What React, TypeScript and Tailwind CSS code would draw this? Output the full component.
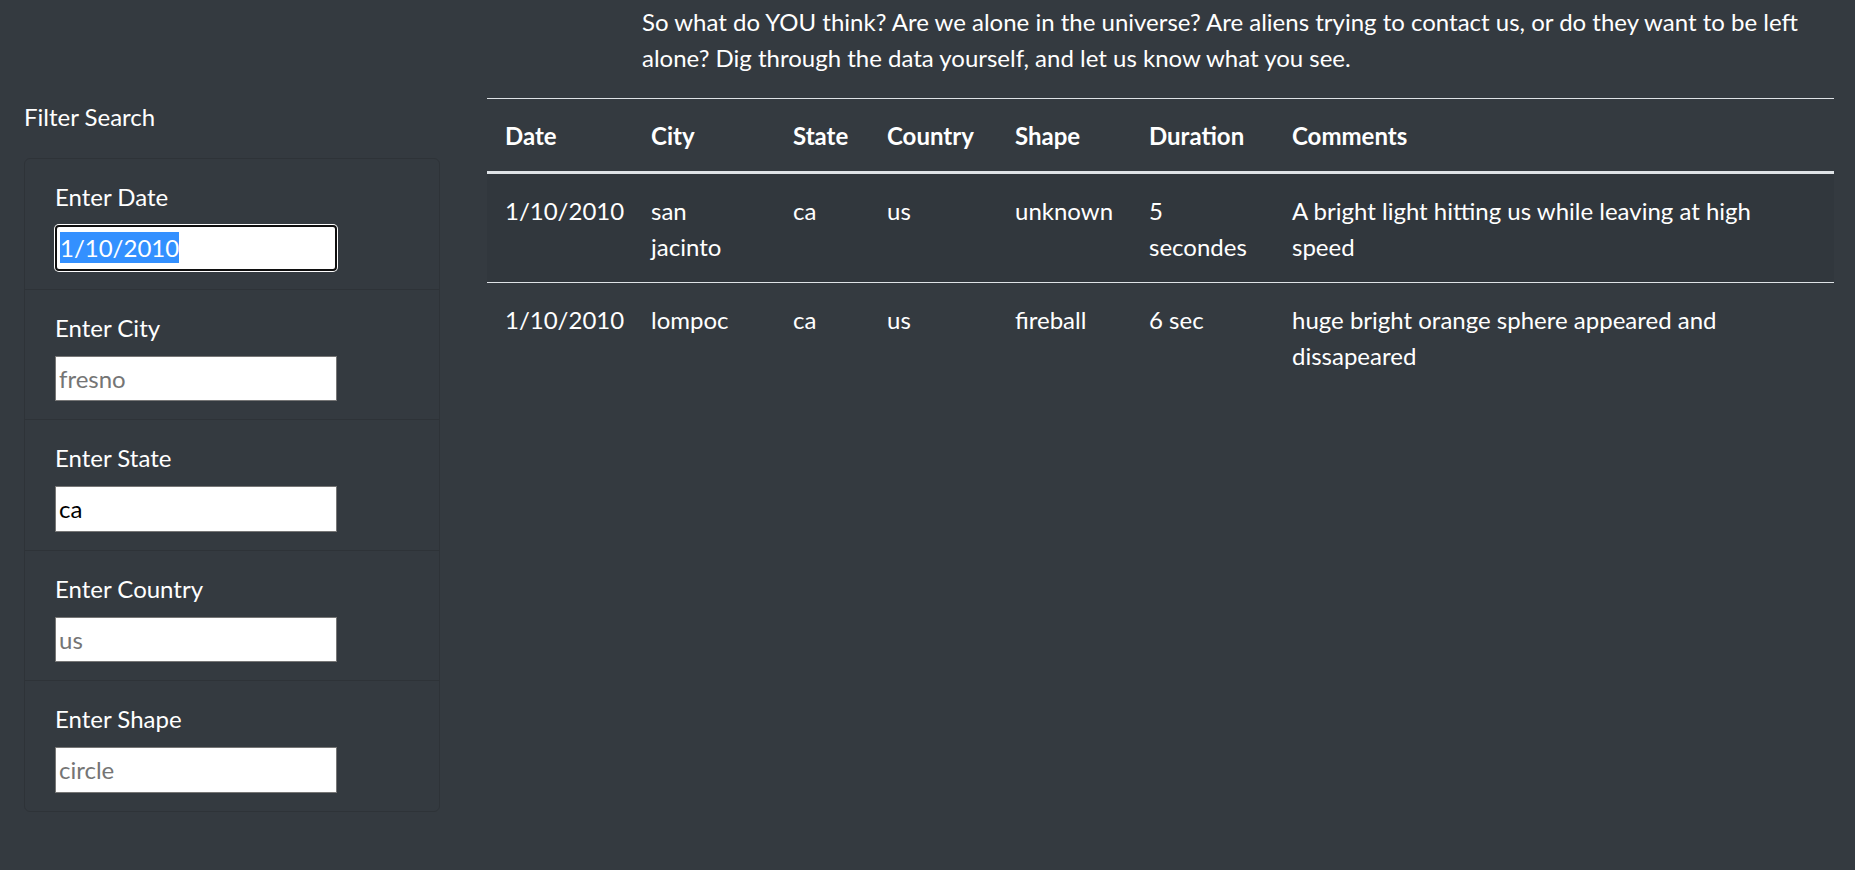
import React from 'react';

type Sighting = {
  date: string;
  city: string;
  state: string;
  country: string;
  shape: string;
  duration: string;
  comments: string;
};

const sightings: Sighting[] = [
  {
    date: '1/10/2010',
    city: 'san jacinto',
    state: 'ca',
    country: 'us',
    shape: 'unknown',
    duration: '5 secondes',
    comments: 'A bright light hitting us while leaving at high speed',
  },
  {
    date: '1/10/2010',
    city: 'lompoc',
    state: 'ca',
    country: 'us',
    shape: 'fireball',
    duration: '6 sec',
    comments: 'huge bright orange sphere appeared and dissapeared',
  },
];

const filters = [
  { id: 'city', label: 'Enter City', placeholder: 'fresno', value: '' },
  { id: 'state', label: 'Enter State', placeholder: 'CA', value: 'ca' },
  { id: 'country', label: 'Enter Country', placeholder: 'us', value: '' },
  { id: 'shape', label: 'Enter Shape', placeholder: 'circle', value: '' },
];

const App: React.FC = () => {
  return (
    <div className="min-h-screen bg-[#343a40] text-white font-['Lato',sans-serif] text-[24px] leading-[36px]">
      <div className="grid grid-cols-[464px_1fr]">
        <div></div>
        <div className="pl-[178px] pr-[21px] pt-[4px] pb-[22px]">
          <p>
            So what do YOU think? Are we alone in the universe? Are aliens trying to contact us, or do they want to be
            left alone? Dig through the data yourself, and let us know what you see.
          </p>
        </div>

        {/* filters */}
        <aside className="px-[24px] pt-[1px]">
          <h5 className="mb-[23px]">Filter Search</h5>
          <ul className="border border-[#2e3338] rounded-[6px]">
            <li className="px-[30px] pt-[20px] pb-[18px] border-b border-[#2e3338]">
              <label className="block mb-[10px]" htmlFor="datetime">
                Enter Date
              </label>
              <div
                id="datetime"
                className="h-[45.5px] w-[282px] bg-white border-2 border-[#101010] rounded-[4px] shadow-[0_0_0_1px_#ffffff] flex items-center pl-[3px]"
              >
                <span className="h-[31px] leading-[31px] bg-[#3390ff] text-white">1/10/2010</span>
              </div>
            </li>
            {filters.map((f, i) => (
              <li
                key={f.id}
                className={
                  i < filters.length - 1
                    ? 'px-[30px] pt-[20px] pb-[18px] border-b border-[#2e3338]'
                    : 'px-[30px] pt-[20px] pb-[18px]'
                }
              >
                <label className="block mb-[10px]" htmlFor={f.id}>
                  {f.label}
                </label>
                <input
                  id={f.id}
                  type="text"
                  defaultValue={f.value}
                  placeholder={f.placeholder}
                  className="block h-[45.5px] w-[282px] bg-white border border-[#767676] px-[3px] text-black placeholder:text-[#757575] outline-none"
                />
              </li>
            ))}
          </ul>
        </aside>

        {/* results */}
        <div className="pl-[23px] pr-[21px]">
          <table className="w-full table-fixed border-separate border-spacing-0 text-left">
            <thead>
              <tr>
                <th className="w-[146px] px-[18px] pt-[19px] pb-[17px] border-t border-b-[3px] border-[#dee2e6] font-bold">Date</th>
                <th className="w-[142px] px-[18px] pt-[19px] pb-[17px] border-t border-b-[3px] border-[#dee2e6] font-bold">City</th>
                <th className="w-[94px] px-[18px] pt-[19px] pb-[17px] border-t border-b-[3px] border-[#dee2e6] font-bold">State</th>
                <th className="w-[128px] px-[18px] pt-[19px] pb-[17px] border-t border-b-[3px] border-[#dee2e6] font-bold">Country</th>
                <th className="w-[134px] px-[18px] pt-[19px] pb-[17px] border-t border-b-[3px] border-[#dee2e6] font-bold">Shape</th>
                <th className="w-[143px] px-[18px] pt-[19px] pb-[17px] border-t border-b-[3px] border-[#dee2e6] font-bold">Duration</th>
                <th className="px-[18px] pt-[19px] pb-[17px] border-t border-b-[3px] border-[#dee2e6] font-bold">Comments</th>
              </tr>
            </thead>
            <tbody>
              {sightings.map((s, i) => {
                const td =
                  i === 0
                    ? 'px-[18px] pt-[19px] pb-[17px] align-top'
                    : 'px-[18px] pt-[19px] pb-[17px] align-top border-t border-[#dee2e6]';
                return (
                  <tr key={i} className={i % 2 === 0 ? 'bg-[#31373d]' : ''}>
                    <td className={td}>{s.date}</td>
                    <td className={td}>{s.city}</td>
                    <td className={td}>{s.state}</td>
                    <td className={td}>{s.country}</td>
                    <td className={td}>{s.shape}</td>
                    <td className={td}>{s.duration}</td>
                    <td className={td}>{s.comments}</td>
                  </tr>
                );
              })}
            </tbody>
          </table>
        </div>
      </div>
    </div>
  );
};

export default App;
